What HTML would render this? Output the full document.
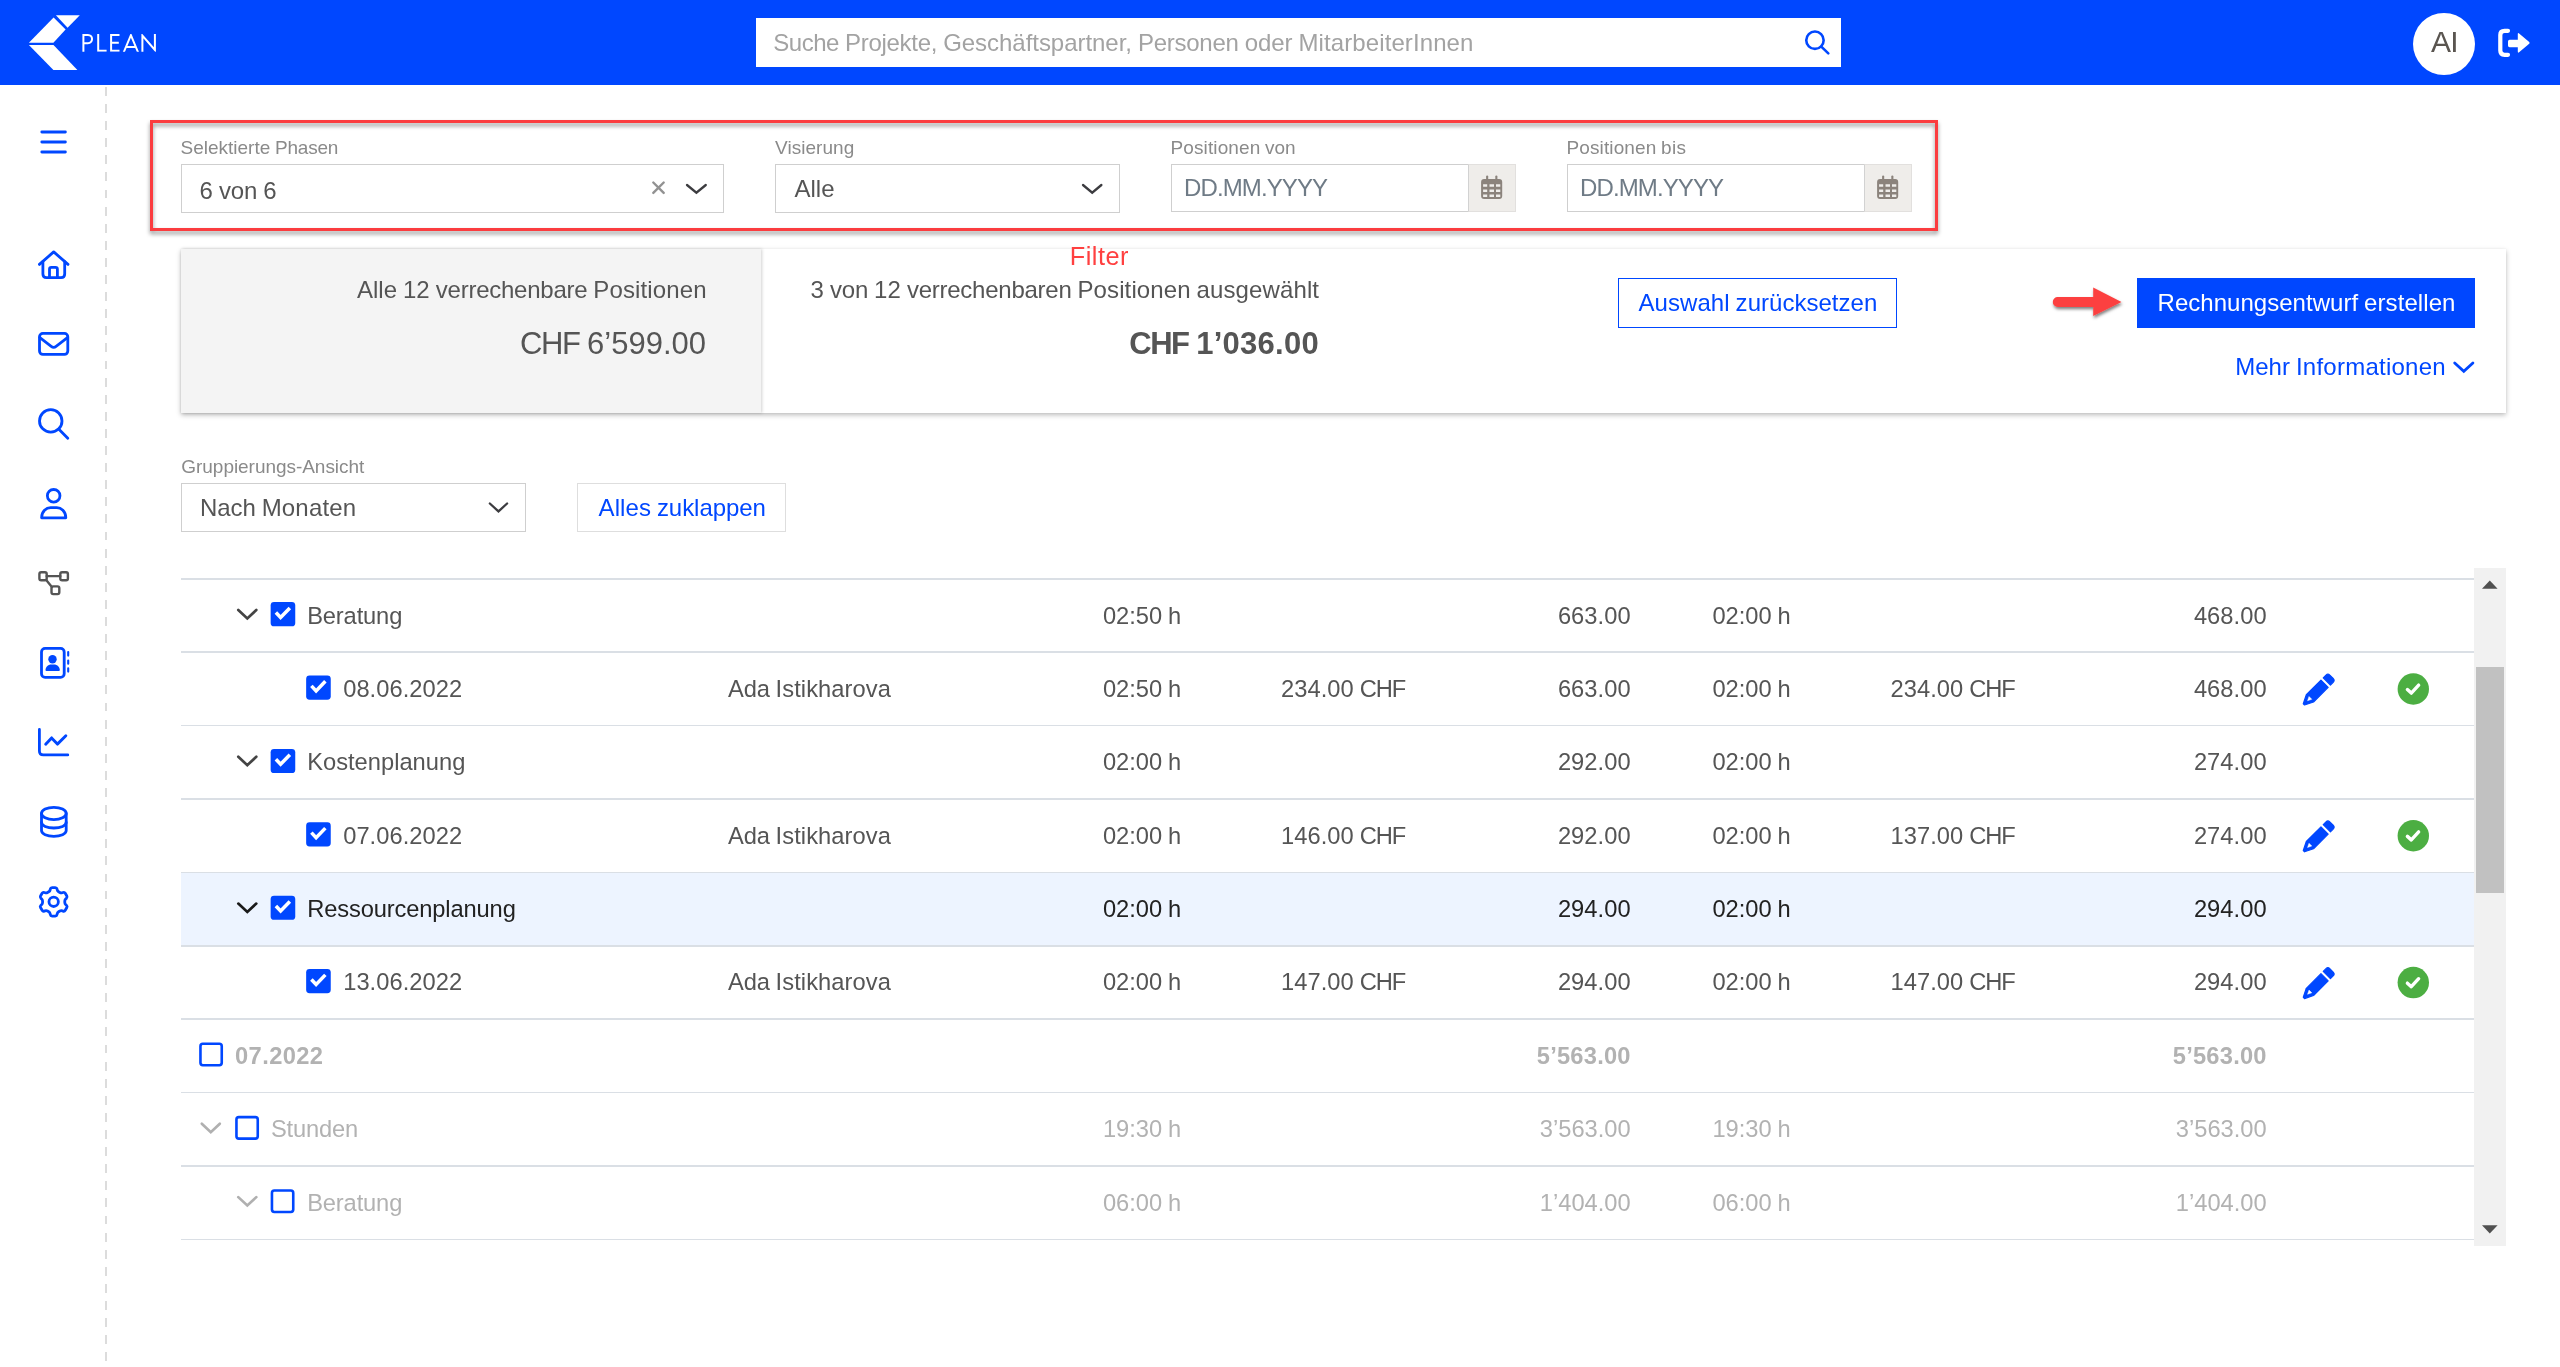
<!DOCTYPE html>
<html lang="de"><head><meta charset="utf-8"><title>PLEAN</title>
<style>
html,body{margin:0;padding:0;overflow:hidden}
html{width:2560px;height:1367px}
body{width:2560px;height:1367px;background:#fff;position:relative;overflow:hidden;font-family:"Liberation Sans",sans-serif;}
.a{position:absolute;box-sizing:border-box}
.t{position:absolute;white-space:pre;font-family:"Liberation Sans",sans-serif}
#hdr{left:0;top:0;width:2560px;height:85px;background:#0047ff}
#search{left:756px;top:17.9px;width:1085px;height:49.6px;background:#fff}
#avatar{left:2413px;top:13px;width:62px;height:62px;border-radius:50%;background:#fff}
#dash{left:105.4px;top:86.5px;width:1.6px;height:1280.5px;background:repeating-linear-gradient(to bottom,#dcdcdc 0,#dcdcdc 8.8px,transparent 8.8px,transparent 17.1px)}
.inp{border:1px solid #cfcfcf;background:#fff}
.addon{background:#efedea;border:1px solid #e2e0de;border-left:1px solid #d2d2d2}
#redbox{left:150px;top:120.2px;width:1788px;height:110.4px;border:3px solid #fb3c3f;filter:drop-shadow(0.8px 3px 2.2px rgba(0,0,0,.42))}
#card{left:181px;top:249px;width:2325px;height:163.5px;background:#fff;box-shadow:0 2px 5px rgba(0,0,0,.27),0 0 1px rgba(0,0,0,.06)}
#cardgray{left:181px;top:249px;width:580px;height:163.5px;background:#f4f4f4;box-shadow:1px 0 3px rgba(0,0,0,.18)}
#btn1{left:1617.5px;top:277.5px;width:279.5px;height:50px;border:1.5px solid #0047ff;background:#fff}
#btn2{left:2137px;top:277.5px;width:338px;height:50px;background:#0047ff}
#btn3{left:577px;top:483px;width:208.75px;height:48.8px;border:1px solid #dedede;background:#fff}
.ln{left:181px;width:2292.8px;height:1.5px;background:#dadfe5}
#sb{left:2473.8px;top:568px;width:32.3px;height:678px;background:#f1f1f1}
#thumb{left:2476px;top:667px;width:28px;height:226px;background:#c1c1c1}
#hl{left:181px;top:872.7px;width:2293px;height:73.4px;background:#edf4ff}
svg{position:absolute;left:0;top:0;overflow:visible}
</style></head>
<body>
<div class="a" id="hdr"></div>
<div class="a" id="search"></div>
<div class="a" id="avatar"></div>
<div class="a" id="dash"></div>

<div class="a" id="card"></div>
<div class="a" id="cardgray"></div>
<div class="a" id="redbox"></div>

<div class="a inp" style="left:181px;top:164px;width:542.75px;height:48.5px"></div>
<div class="a inp" style="left:775px;top:164px;width:344.5px;height:48.5px"></div>
<div class="a inp" style="left:1171px;top:164px;width:344.7px;height:48px"></div>
<div class="a addon" style="left:1468.2px;top:164px;width:47.5px;height:48px"></div>
<div class="a inp" style="left:1567px;top:164px;width:344.7px;height:48px"></div>
<div class="a addon" style="left:1864.2px;top:164px;width:47.5px;height:48px"></div>

<div class="a" id="btn1"></div>
<div class="a" id="btn2"></div>
<div class="a inp" style="left:181px;top:483px;width:344.75px;height:48.8px"></div>
<div class="a" id="btn3"></div>

<div class="a" id="hl"></div>
<div class="a ln" style="top:578.05px"></div>
<div class="a ln" style="top:651.44px"></div>
<div class="a ln" style="top:724.83px"></div>
<div class="a ln" style="top:798.22px"></div>
<div class="a ln" style="top:871.61px"></div>
<div class="a ln" style="top:945.00px"></div>
<div class="a ln" style="top:1018.39px"></div>
<div class="a ln" style="top:1091.78px"></div>
<div class="a ln" style="top:1165.17px"></div>
<div class="a ln" style="top:1238.56px"></div>
<div class="a" id="sb"></div>
<div class="a" id="thumb"></div>

<div id="txt" class="a" style="left:0;top:0;width:2560px;height:1367px;will-change:transform">
<span class="t" style="left:773.20px;top:30.98px;font-size:24px;line-height:24px;font-weight:400;color:#a3a3a3;letter-spacing:-0.456px;">Suche</span>
<span class="t" style="left:844.92px;top:30.98px;font-size:24px;line-height:24px;font-weight:400;color:#a3a3a3;letter-spacing:-0.262px;">Projekte,</span>
<span class="t" style="left:943.20px;top:30.98px;font-size:24px;line-height:24px;font-weight:400;color:#a3a3a3;letter-spacing:-0.041px;">Geschäftspartner,</span>
<span class="t" style="left:1137.88px;top:30.98px;font-size:24px;line-height:24px;font-weight:400;color:#a3a3a3;letter-spacing:-0.241px;">Personen</span>
<span class="t" style="left:1244.63px;top:30.98px;font-size:24px;line-height:24px;font-weight:400;color:#a3a3a3;letter-spacing:-0.028px;">oder</span>
<span class="t" style="left:1298.49px;top:30.98px;font-size:24px;line-height:24px;font-weight:400;color:#a3a3a3;letter-spacing:0.098px;">MitarbeiterInnen</span>
<span class="t" style="left:2431.00px;top:27.00px;font-size:30px;line-height:30px;font-weight:400;color:#5a5550;letter-spacing:-0.880px;">AI</span>
<span class="t" style="left:180.50px;top:138.01px;font-size:19px;line-height:19px;font-weight:400;color:#8a8a8a;letter-spacing:0.001px;">Selektierte</span>
<span class="t" style="left:275.00px;top:138.01px;font-size:19px;line-height:19px;font-weight:400;color:#8a8a8a;letter-spacing:-0.214px;">Phasen</span>
<span class="t" style="left:775.00px;top:138.01px;font-size:19px;line-height:19px;font-weight:400;color:#8a8a8a;letter-spacing:0.047px;">Visierung</span>
<span class="t" style="left:1170.50px;top:138.01px;font-size:19px;line-height:19px;font-weight:400;color:#8a8a8a;letter-spacing:0.114px;">Positionen</span>
<span class="t" style="left:1265.08px;top:138.01px;font-size:19px;line-height:19px;font-weight:400;color:#8a8a8a;letter-spacing:-0.078px;">von</span>
<span class="t" style="left:1566.50px;top:138.01px;font-size:19px;line-height:19px;font-weight:400;color:#8a8a8a;letter-spacing:0.114px;">Positionen</span>
<span class="t" style="left:1661.08px;top:138.01px;font-size:19px;line-height:19px;font-weight:400;color:#8a8a8a;letter-spacing:0.271px;">bis</span>
<span class="t" style="left:199.50px;top:179.08px;font-size:24px;line-height:24px;font-weight:400;color:#555;letter-spacing:0.141px;">6</span>
<span class="t" style="left:218.95px;top:179.08px;font-size:24px;line-height:24px;font-weight:400;color:#555;letter-spacing:-0.104px;">von</span>
<span class="t" style="left:263.30px;top:179.08px;font-size:24px;line-height:24px;font-weight:400;color:#555;letter-spacing:0.141px;">6</span>
<span class="t" style="left:794.50px;top:176.58px;font-size:24px;line-height:24px;font-weight:400;color:#555;letter-spacing:0.008px;">Alle</span>
<span class="t" style="left:1184.00px;top:176.48px;font-size:24px;line-height:24px;font-weight:400;color:#6f7b86;letter-spacing:-0.886px;">DD.MM.YYYY</span>
<span class="t" style="left:1580.00px;top:176.48px;font-size:24px;line-height:24px;font-weight:400;color:#6f7b86;letter-spacing:-0.886px;">DD.MM.YYYY</span>
<span class="t" style="left:357.00px;top:277.68px;font-size:24px;line-height:24px;font-weight:400;color:#555;letter-spacing:-0.012px;">Alle</span>
<span class="t" style="left:402.92px;top:277.68px;font-size:24px;line-height:24px;font-weight:400;color:#555;letter-spacing:0.114px;">12</span>
<span class="t" style="left:435.78px;top:277.68px;font-size:24px;line-height:24px;font-weight:400;color:#555;letter-spacing:-0.243px;">verrechenbare</span>
<span class="t" style="left:593.33px;top:277.68px;font-size:24px;line-height:24px;font-weight:400;color:#555;letter-spacing:0.121px;">Positionen</span>
<span class="t" style="left:519.97px;top:327.95px;font-size:31px;line-height:31px;font-weight:400;color:#555;letter-spacing:-1.427px;">CHF</span>
<span class="t" style="left:587.09px;top:327.95px;font-size:31px;line-height:31px;font-weight:400;color:#555;letter-spacing:-0.004px;">6’599.00</span>
<span class="t" style="left:810.50px;top:277.68px;font-size:24px;line-height:24px;font-weight:400;color:#555;letter-spacing:0.099px;">3</span>
<span class="t" style="left:829.89px;top:277.68px;font-size:24px;line-height:24px;font-weight:400;color:#555;letter-spacing:-0.143px;">von</span>
<span class="t" style="left:874.10px;top:277.68px;font-size:24px;line-height:24px;font-weight:400;color:#555;letter-spacing:0.099px;">12</span>
<span class="t" style="left:906.92px;top:277.68px;font-size:24px;line-height:24px;font-weight:400;color:#555;letter-spacing:-0.247px;">verrechenbaren</span>
<span class="t" style="left:1077.51px;top:277.68px;font-size:24px;line-height:24px;font-weight:400;color:#555;letter-spacing:0.109px;">Positionen</span>
<span class="t" style="left:1196.60px;top:277.68px;font-size:24px;line-height:24px;font-weight:400;color:#555;letter-spacing:0.108px;">ausgewählt</span>
<span class="t" style="left:1129.28px;top:327.95px;font-size:31px;line-height:31px;font-weight:700;color:#555;letter-spacing:-1.510px;">CHF</span>
<span class="t" style="left:1196.17px;top:327.95px;font-size:31px;line-height:31px;font-weight:700;color:#555;letter-spacing:0.270px;">1’036.00</span>
<span class="t" style="left:1069.70px;top:244.48px;font-size:25.3px;line-height:25.3px;font-weight:400;color:#ff4040;letter-spacing:0.514px;">Filter</span>
<span class="t" style="left:1638.50px;top:290.58px;font-size:24px;line-height:24px;font-weight:400;color:#0047ff;letter-spacing:0.064px;">Auswahl</span>
<span class="t" style="left:1735.61px;top:290.58px;font-size:24px;line-height:24px;font-weight:400;color:#0047ff;letter-spacing:0.024px;">zurücksetzen</span>
<span class="t" style="left:2157.60px;top:290.58px;font-size:24px;line-height:24px;font-weight:400;color:#fff;letter-spacing:0.026px;">Rechnungsentwurf</span>
<span class="t" style="left:2364.09px;top:290.58px;font-size:24px;line-height:24px;font-weight:400;color:#fff;letter-spacing:0.079px;">erstellen</span>
<span class="t" style="left:2235.20px;top:355.48px;font-size:24px;line-height:24px;font-weight:400;color:#0047ff;letter-spacing:0.025px;">Mehr</span>
<span class="t" style="left:2295.91px;top:355.48px;font-size:24px;line-height:24px;font-weight:400;color:#0047ff;letter-spacing:0.248px;">Informationen</span>
<span class="t" style="left:181.30px;top:456.91px;font-size:19px;line-height:19px;font-weight:400;color:#8a8a8a;letter-spacing:-0.040px;">Gruppierungs-Ansicht</span>
<span class="t" style="left:199.90px;top:496.08px;font-size:24px;line-height:24px;font-weight:400;color:#555;letter-spacing:-0.043px;">Nach</span>
<span class="t" style="left:261.70px;top:496.08px;font-size:24px;line-height:24px;font-weight:400;color:#555;letter-spacing:0.170px;">Monaten</span>
<span class="t" style="left:598.60px;top:496.08px;font-size:24px;line-height:24px;font-weight:400;color:#0047ff;letter-spacing:0.070px;">Alles</span>
<span class="t" style="left:656.93px;top:496.08px;font-size:24px;line-height:24px;font-weight:400;color:#0047ff;letter-spacing:-0.050px;">zuklappen</span>
<span class="t" style="left:307.20px;top:604.53px;font-size:23.7px;line-height:23.7px;font-weight:400;color:#555;letter-spacing:-0.146px;">Beratung</span>
<span class="t" style="left:1103.00px;top:604.53px;font-size:23.7px;line-height:23.7px;font-weight:400;color:#555;letter-spacing:-0.056px;">02:50</span>
<span class="t" style="left:1167.88px;top:604.53px;font-size:23.7px;line-height:23.7px;font-weight:400;color:#555;letter-spacing:-0.141px;">h</span>
<span class="t" style="left:1557.89px;top:604.53px;font-size:23.7px;line-height:23.7px;font-weight:400;color:#555;letter-spacing:0.060px;">663.00</span>
<span class="t" style="left:1712.50px;top:604.53px;font-size:23.7px;line-height:23.7px;font-weight:400;color:#555;letter-spacing:-0.056px;">02:00</span>
<span class="t" style="left:1777.38px;top:604.53px;font-size:23.7px;line-height:23.7px;font-weight:400;color:#555;letter-spacing:-0.141px;">h</span>
<span class="t" style="left:2193.89px;top:604.53px;font-size:23.7px;line-height:23.7px;font-weight:400;color:#555;letter-spacing:0.060px;">468.00</span>
<span class="t" style="left:343.20px;top:677.92px;font-size:23.7px;line-height:23.7px;font-weight:400;color:#555;letter-spacing:0.044px;">08.06.2022</span>
<span class="t" style="left:728.00px;top:677.92px;font-size:23.7px;line-height:23.7px;font-weight:400;color:#555;letter-spacing:-0.151px;">Ada</span>
<span class="t" style="left:775.58px;top:677.92px;font-size:23.7px;line-height:23.7px;font-weight:400;color:#555;letter-spacing:0.081px;">Istikharova</span>
<span class="t" style="left:1103.00px;top:677.92px;font-size:23.7px;line-height:23.7px;font-weight:400;color:#555;letter-spacing:-0.056px;">02:50</span>
<span class="t" style="left:1167.88px;top:677.92px;font-size:23.7px;line-height:23.7px;font-weight:400;color:#555;letter-spacing:-0.141px;">h</span>
<span class="t" style="left:1281.00px;top:677.92px;font-size:23.7px;line-height:23.7px;font-weight:400;color:#555;letter-spacing:0.060px;">234.00</span>
<span class="t" style="left:1359.69px;top:677.92px;font-size:23.7px;line-height:23.7px;font-weight:400;color:#555;letter-spacing:-1.089px;">CHF</span>
<span class="t" style="left:1557.89px;top:677.92px;font-size:23.7px;line-height:23.7px;font-weight:400;color:#555;letter-spacing:0.060px;">663.00</span>
<span class="t" style="left:1712.50px;top:677.92px;font-size:23.7px;line-height:23.7px;font-weight:400;color:#555;letter-spacing:-0.056px;">02:00</span>
<span class="t" style="left:1777.38px;top:677.92px;font-size:23.7px;line-height:23.7px;font-weight:400;color:#555;letter-spacing:-0.141px;">h</span>
<span class="t" style="left:1890.50px;top:677.92px;font-size:23.7px;line-height:23.7px;font-weight:400;color:#555;letter-spacing:0.060px;">234.00</span>
<span class="t" style="left:1969.19px;top:677.92px;font-size:23.7px;line-height:23.7px;font-weight:400;color:#555;letter-spacing:-1.089px;">CHF</span>
<span class="t" style="left:2193.89px;top:677.92px;font-size:23.7px;line-height:23.7px;font-weight:400;color:#555;letter-spacing:0.060px;">468.00</span>
<span class="t" style="left:307.20px;top:751.31px;font-size:23.7px;line-height:23.7px;font-weight:400;color:#555;letter-spacing:0.007px;">Kostenplanung</span>
<span class="t" style="left:1103.00px;top:751.31px;font-size:23.7px;line-height:23.7px;font-weight:400;color:#555;letter-spacing:-0.056px;">02:00</span>
<span class="t" style="left:1167.88px;top:751.31px;font-size:23.7px;line-height:23.7px;font-weight:400;color:#555;letter-spacing:-0.141px;">h</span>
<span class="t" style="left:1557.89px;top:751.31px;font-size:23.7px;line-height:23.7px;font-weight:400;color:#555;letter-spacing:0.060px;">292.00</span>
<span class="t" style="left:1712.50px;top:751.31px;font-size:23.7px;line-height:23.7px;font-weight:400;color:#555;letter-spacing:-0.056px;">02:00</span>
<span class="t" style="left:1777.38px;top:751.31px;font-size:23.7px;line-height:23.7px;font-weight:400;color:#555;letter-spacing:-0.141px;">h</span>
<span class="t" style="left:2193.89px;top:751.31px;font-size:23.7px;line-height:23.7px;font-weight:400;color:#555;letter-spacing:0.060px;">274.00</span>
<span class="t" style="left:343.20px;top:824.70px;font-size:23.7px;line-height:23.7px;font-weight:400;color:#555;letter-spacing:0.044px;">07.06.2022</span>
<span class="t" style="left:728.00px;top:824.70px;font-size:23.7px;line-height:23.7px;font-weight:400;color:#555;letter-spacing:-0.151px;">Ada</span>
<span class="t" style="left:775.58px;top:824.70px;font-size:23.7px;line-height:23.7px;font-weight:400;color:#555;letter-spacing:0.081px;">Istikharova</span>
<span class="t" style="left:1103.00px;top:824.70px;font-size:23.7px;line-height:23.7px;font-weight:400;color:#555;letter-spacing:-0.056px;">02:00</span>
<span class="t" style="left:1167.88px;top:824.70px;font-size:23.7px;line-height:23.7px;font-weight:400;color:#555;letter-spacing:-0.141px;">h</span>
<span class="t" style="left:1281.00px;top:824.70px;font-size:23.7px;line-height:23.7px;font-weight:400;color:#555;letter-spacing:0.060px;">146.00</span>
<span class="t" style="left:1359.69px;top:824.70px;font-size:23.7px;line-height:23.7px;font-weight:400;color:#555;letter-spacing:-1.089px;">CHF</span>
<span class="t" style="left:1557.89px;top:824.70px;font-size:23.7px;line-height:23.7px;font-weight:400;color:#555;letter-spacing:0.060px;">292.00</span>
<span class="t" style="left:1712.50px;top:824.70px;font-size:23.7px;line-height:23.7px;font-weight:400;color:#555;letter-spacing:-0.056px;">02:00</span>
<span class="t" style="left:1777.38px;top:824.70px;font-size:23.7px;line-height:23.7px;font-weight:400;color:#555;letter-spacing:-0.141px;">h</span>
<span class="t" style="left:1890.50px;top:824.70px;font-size:23.7px;line-height:23.7px;font-weight:400;color:#555;letter-spacing:0.060px;">137.00</span>
<span class="t" style="left:1969.19px;top:824.70px;font-size:23.7px;line-height:23.7px;font-weight:400;color:#555;letter-spacing:-1.089px;">CHF</span>
<span class="t" style="left:2193.89px;top:824.70px;font-size:23.7px;line-height:23.7px;font-weight:400;color:#555;letter-spacing:0.060px;">274.00</span>
<span class="t" style="left:307.20px;top:898.09px;font-size:23.7px;line-height:23.7px;font-weight:400;color:#222;letter-spacing:-0.130px;">Ressourcenplanung</span>
<span class="t" style="left:1103.00px;top:898.09px;font-size:23.7px;line-height:23.7px;font-weight:400;color:#222;letter-spacing:-0.056px;">02:00</span>
<span class="t" style="left:1167.88px;top:898.09px;font-size:23.7px;line-height:23.7px;font-weight:400;color:#222;letter-spacing:-0.141px;">h</span>
<span class="t" style="left:1557.89px;top:898.09px;font-size:23.7px;line-height:23.7px;font-weight:400;color:#222;letter-spacing:0.060px;">294.00</span>
<span class="t" style="left:1712.50px;top:898.09px;font-size:23.7px;line-height:23.7px;font-weight:400;color:#222;letter-spacing:-0.056px;">02:00</span>
<span class="t" style="left:1777.38px;top:898.09px;font-size:23.7px;line-height:23.7px;font-weight:400;color:#222;letter-spacing:-0.141px;">h</span>
<span class="t" style="left:2193.89px;top:898.09px;font-size:23.7px;line-height:23.7px;font-weight:400;color:#222;letter-spacing:0.060px;">294.00</span>
<span class="t" style="left:343.20px;top:971.48px;font-size:23.7px;line-height:23.7px;font-weight:400;color:#555;letter-spacing:0.044px;">13.06.2022</span>
<span class="t" style="left:728.00px;top:971.48px;font-size:23.7px;line-height:23.7px;font-weight:400;color:#555;letter-spacing:-0.151px;">Ada</span>
<span class="t" style="left:775.58px;top:971.48px;font-size:23.7px;line-height:23.7px;font-weight:400;color:#555;letter-spacing:0.081px;">Istikharova</span>
<span class="t" style="left:1103.00px;top:971.48px;font-size:23.7px;line-height:23.7px;font-weight:400;color:#555;letter-spacing:-0.056px;">02:00</span>
<span class="t" style="left:1167.88px;top:971.48px;font-size:23.7px;line-height:23.7px;font-weight:400;color:#555;letter-spacing:-0.141px;">h</span>
<span class="t" style="left:1281.00px;top:971.48px;font-size:23.7px;line-height:23.7px;font-weight:400;color:#555;letter-spacing:0.060px;">147.00</span>
<span class="t" style="left:1359.69px;top:971.48px;font-size:23.7px;line-height:23.7px;font-weight:400;color:#555;letter-spacing:-1.089px;">CHF</span>
<span class="t" style="left:1557.89px;top:971.48px;font-size:23.7px;line-height:23.7px;font-weight:400;color:#555;letter-spacing:0.060px;">294.00</span>
<span class="t" style="left:1712.50px;top:971.48px;font-size:23.7px;line-height:23.7px;font-weight:400;color:#555;letter-spacing:-0.056px;">02:00</span>
<span class="t" style="left:1777.38px;top:971.48px;font-size:23.7px;line-height:23.7px;font-weight:400;color:#555;letter-spacing:-0.141px;">h</span>
<span class="t" style="left:1890.50px;top:971.48px;font-size:23.7px;line-height:23.7px;font-weight:400;color:#555;letter-spacing:0.060px;">147.00</span>
<span class="t" style="left:1969.19px;top:971.48px;font-size:23.7px;line-height:23.7px;font-weight:400;color:#555;letter-spacing:-1.089px;">CHF</span>
<span class="t" style="left:2193.89px;top:971.48px;font-size:23.7px;line-height:23.7px;font-weight:400;color:#555;letter-spacing:0.060px;">294.00</span>
<span class="t" style="left:235.00px;top:1044.87px;font-size:23.7px;line-height:23.7px;font-weight:700;color:#b2b2b2;letter-spacing:0.400px;">07.2022</span>
<span class="t" style="left:1536.84px;top:1044.87px;font-size:23.7px;line-height:23.7px;font-weight:700;color:#b2b2b2;letter-spacing:0.205px;">5’563.00</span>
<span class="t" style="left:2172.84px;top:1044.87px;font-size:23.7px;line-height:23.7px;font-weight:700;color:#b2b2b2;letter-spacing:0.205px;">5’563.00</span>
<span class="t" style="left:271.00px;top:1118.26px;font-size:23.7px;line-height:23.7px;font-weight:400;color:#b2b2b2;letter-spacing:-0.183px;">Stunden</span>
<span class="t" style="left:1103.00px;top:1118.26px;font-size:23.7px;line-height:23.7px;font-weight:400;color:#b2b2b2;letter-spacing:-0.056px;">19:30</span>
<span class="t" style="left:1167.88px;top:1118.26px;font-size:23.7px;line-height:23.7px;font-weight:400;color:#b2b2b2;letter-spacing:-0.141px;">h</span>
<span class="t" style="left:1539.83px;top:1118.26px;font-size:23.7px;line-height:23.7px;font-weight:400;color:#b2b2b2;letter-spacing:-0.002px;">3’563.00</span>
<span class="t" style="left:1712.50px;top:1118.26px;font-size:23.7px;line-height:23.7px;font-weight:400;color:#b2b2b2;letter-spacing:-0.056px;">19:30</span>
<span class="t" style="left:1777.38px;top:1118.26px;font-size:23.7px;line-height:23.7px;font-weight:400;color:#b2b2b2;letter-spacing:-0.141px;">h</span>
<span class="t" style="left:2175.82px;top:1118.26px;font-size:23.7px;line-height:23.7px;font-weight:400;color:#b2b2b2;letter-spacing:-0.002px;">3’563.00</span>
<span class="t" style="left:307.20px;top:1191.65px;font-size:23.7px;line-height:23.7px;font-weight:400;color:#b2b2b2;letter-spacing:-0.146px;">Beratung</span>
<span class="t" style="left:1103.00px;top:1191.65px;font-size:23.7px;line-height:23.7px;font-weight:400;color:#b2b2b2;letter-spacing:-0.056px;">06:00</span>
<span class="t" style="left:1167.88px;top:1191.65px;font-size:23.7px;line-height:23.7px;font-weight:400;color:#b2b2b2;letter-spacing:-0.141px;">h</span>
<span class="t" style="left:1539.83px;top:1191.65px;font-size:23.7px;line-height:23.7px;font-weight:400;color:#b2b2b2;letter-spacing:-0.002px;">1’404.00</span>
<span class="t" style="left:1712.50px;top:1191.65px;font-size:23.7px;line-height:23.7px;font-weight:400;color:#b2b2b2;letter-spacing:-0.056px;">06:00</span>
<span class="t" style="left:1777.38px;top:1191.65px;font-size:23.7px;line-height:23.7px;font-weight:400;color:#b2b2b2;letter-spacing:-0.141px;">h</span>
<span class="t" style="left:2175.82px;top:1191.65px;font-size:23.7px;line-height:23.7px;font-weight:400;color:#b2b2b2;letter-spacing:-0.002px;">1’404.00</span>
</div>

<svg width="2560" height="1367" viewBox="0 0 2560 1367">
<g fill="#fff"><polygon points="28.9,42.7 53.6,17.6 65.6,29.4 53.4,42.7"/><polygon points="55.9,15.2 79.8,15.2 67.6,27.8"/><polygon points="28.9,45.1 53.5,45.1 77.4,70 53.4,70"/></g>
<defs><clipPath id="capc"><rect x="80" y="34" width="80" height="17.65"/></clipPath></defs>
<g clip-path="url(#capc)" fill="none" stroke="#fff" stroke-width="2" stroke-linejoin="miter" stroke-linecap="butt"><path d="M83.4 52 V35 H87.9 C93.4 35 93.4 43.2 87.9 43.2 H83.4"/><path d="M98.2 33 V50.65 H106.6"/><path d="M119.5 35 H111.1 V50.65 H119.5 M111.1 42.8 H118.8"/><path d="M123.7 52.3 L130.9 35.2 L138.1 52.3 M126.4 47 H135.4"/><path d="M142.4 52.5 V35.6 L154.9 50 V33"/></g>
<g fill="none" stroke="#0047ff" stroke-width="2.6" stroke-linecap="round"><circle cx="1814.95" cy="40.2" r="8.7"/><path d="M1821.3 46.6 L1828.3 53.4"/></g>
<g fill="none" stroke="#fff" stroke-width="4.2" stroke-linecap="round" stroke-linejoin="round"><path d="M2508 30.8 H2504.5 Q2500.3 30.8 2500.3 35 V50.6 Q2500.3 54.8 2504.5 54.8 H2508"/></g><path fill="#fff" d="M2509.6 39.8 H2517.8 V34 Q2517.8 32.3 2519.1 33.4 L2529.2 41.9 Q2530.1 42.8 2529.2 43.7 L2519.1 52.2 Q2517.8 53.3 2517.8 51.6 V47.2 H2509.6 Q2508 47.2 2508 45.6 V41.4 Q2508 39.8 2509.6 39.8 Z"/>
<g fill="none" stroke="#0047ff" stroke-width="2.8" stroke-linecap="round" stroke-linejoin="round" stroke-width="3.2"><path d="M41.8 132 H65.4 M41.8 142 H65.4 M41.8 152 H65.4"/></g>
<g fill="none" stroke="#0047ff" stroke-width="2.8" stroke-linecap="round" stroke-linejoin="round" stroke-width="2.6"><path d="M39.4 264.4 L53.7 251.9 L68 264.4"/><path d="M42.9 261.6 V274 Q42.9 277.6 46.5 277.6 H61.1 Q64.7 277.6 64.7 274 V261.6"/><path d="M49.5 277.4 V269.2 Q49.5 267.3 51.4 267.3 H55.5 Q57.4 267.3 57.4 269.2 V277.4"/></g>
<g fill="none" stroke="#0047ff" stroke-width="2.8" stroke-linecap="round" stroke-linejoin="round"><rect x="39.5" y="333.4" width="28.3" height="21" rx="3.4"/><path stroke-width="2.7" d="M39.9 337.6 L51.2 346.4 Q53.65 348.3 56.1 346.4 L67.4 337.6"/></g>
<g fill="none" stroke="#0047ff" stroke-width="2.8" stroke-linecap="round" stroke-linejoin="round" stroke-width="2.9"><circle cx="50.75" cy="420.9" r="11.25"/><path d="M58.9 429.2 L67.8 438.2"/></g>
<g fill="none" stroke="#0047ff" stroke-width="2.8" stroke-linecap="round" stroke-linejoin="round" stroke-width="2.9"><circle cx="53.67" cy="495.8" r="6.3"/><path d="M41.6 517.8 C41.6 511.2 46.4 507.7 50.6 507.7 H56.8 C61 507.7 65.8 511.2 65.8 517.8 Z"/></g>
<g fill="none" stroke="#555" stroke-width="2.4" stroke-linejoin="round" stroke-linecap="round"><rect x="39.4" y="572.2" width="7.3" height="8" rx="1.8"/><rect x="60.3" y="572.2" width="7.6" height="8" rx="1.8"/><rect x="51.5" y="586.4" width="7.8" height="7.7" rx="1.8"/><path d="M46.7 576.1 H60.3 M46.2 580 L51.9 587"/></g>
<g fill="none" stroke="#0047ff" stroke-width="2.8" stroke-linecap="round" stroke-linejoin="round" stroke-width="2.9"><rect x="41.5" y="648.4" width="22.7" height="28.9" rx="3.6"/></g><g fill="#0047ff"><circle cx="52.5" cy="659.2" r="4.2"/><path d="M45.5 670 C45.6 666.6 48.6 664.5 51 664.5 H54.3 C56.7 664.5 59.7 666.6 59.8 670 Q59.8 670.9 58.9 670.9 H46.4 Q45.5 670.9 45.5 670 Z"/></g><g stroke="#0047ff" stroke-width="2.1" stroke-linecap="round"><path d="M68.2 652.1 V655.6 M68.2 660.5 V663.7 M68.2 668.2 V671.6"/></g>
<g fill="none" stroke="#0047ff" stroke-width="2.8" stroke-linecap="round" stroke-linejoin="round" stroke-width="3"><path d="M39.4 729.4 V751 Q39.4 754.9 43.3 754.9 H67.8"/><path stroke-width="2.9" d="M45.7 744.3 L51.6 737.9 L57.4 744.1 L65.85 735.7"/></g>
<g fill="none" stroke="#0047ff" stroke-width="2.8" stroke-linecap="round" stroke-linejoin="round" stroke-width="2.9"><ellipse cx="53.85" cy="813.45" rx="12.35" ry="6.15"/><path d="M41.5 813.45 V830.6 C41.5 834 47 836.3 53.85 836.3 C60.7 836.3 66.2 834 66.2 830.6 V813.45"/><path d="M41.5 822.3 C41.5 825.7 47 828 53.85 828 C60.7 828 66.2 825.7 66.2 822.3"/></g>
<g fill="none" stroke="#0047ff" stroke-width="2.8" stroke-linecap="round" stroke-linejoin="round" stroke-width="2.8"><path d="M48.77 891.80 Q49.90 891.15 50.14 889.87 L50.30 889.00 Q50.58 887.53 52.08 887.53 L55.26 887.53 Q56.76 887.53 57.04 889.00 L57.20 889.87 Q57.44 891.15 58.57 891.80 L59.88 892.56 Q61.01 893.21 62.24 892.78 L63.07 892.49 Q64.49 891.99 65.24 893.29 L66.82 896.04 Q67.57 897.34 66.43 898.32 L65.77 898.89 Q64.78 899.74 64.78 901.04 L64.78 902.56 Q64.78 903.86 65.77 904.71 L66.43 905.28 Q67.57 906.26 66.82 907.56 L65.24 910.31 Q64.49 911.61 63.07 911.11 L62.24 910.82 Q61.01 910.39 59.88 911.04 L58.57 911.80 Q57.44 912.45 57.20 913.73 L57.04 914.60 Q56.76 916.07 55.26 916.07 L52.08 916.07 Q50.58 916.07 50.30 914.60 L50.14 913.73 Q49.90 912.45 48.77 911.80 L47.46 911.04 Q46.33 910.39 45.10 910.82 L44.27 911.11 Q42.85 911.61 42.10 910.31 L40.52 907.56 Q39.77 906.26 40.91 905.28 L41.57 904.71 Q42.56 903.86 42.56 902.56 L42.56 901.04 Q42.56 899.74 41.57 898.89 L40.91 898.32 Q39.77 897.34 40.52 896.04 L42.10 893.29 Q42.85 891.99 44.27 892.49 L45.10 892.78 Q46.33 893.21 47.46 892.56 Z"/><circle cx="53.67" cy="901.8" r="4.7"/></g>
<path fill="none" stroke="#929292" stroke-width="2.4" stroke-linecap="round" d="M653.3 182.5 L663.7 192.9 M663.7 182.5 L653.3 192.9"/>
<path fill="none" stroke="#3c3c40" stroke-width="2.3" stroke-linecap="round" stroke-linejoin="miter" d="M687.0 185.0 L696.4 192.70000000000002 L705.8 185.0"/>
<path fill="none" stroke="#3c3c40" stroke-width="2.3" stroke-linecap="round" stroke-linejoin="miter" d="M1083.0 185.0 L1092.2 192.70000000000002 L1101.4 185.0"/>
<path fill="none" stroke="#3c3c40" stroke-width="2.3" stroke-linecap="round" stroke-linejoin="miter" d="M489.85 503.5 L498.475 511.4 L507.09999999999997 503.5"/>
<path fill="none" stroke="#0047ff" stroke-width="2.8" stroke-linecap="round" stroke-linejoin="miter" d="M2454.7 363.0 L2463.8 371.4 L2472.9 363.0"/>
<g fill="#8b837c"><rect x="1486.10" y="175.50" width="2.1" height="6" rx="1"/><rect x="1495.30" y="175.50" width="2.1" height="6" rx="1"/><path fill-rule="evenodd" d="M1484.10 178.90 H1499.20 Q1502.20 178.90 1502.20 181.90 V196.00 Q1502.20 199.00 1499.20 199.00 H1484.10 Q1481.10 199.00 1481.10 196.00 V181.90 Q1481.10 178.90 1484.10 178.90 Z M1483.10 184.20 h4.1 v2.6 h-4.1 Z M1489.50 184.20 h4.5 v2.6 h-4.5 Z M1496.00 184.20 h4.3 v2.6 h-4.3 Z M1483.10 189.40 h4.1 v2.6 h-4.1 Z M1489.50 189.40 h4.5 v2.6 h-4.5 Z M1496.00 189.40 h4.3 v2.6 h-4.3 Z M1483.10 194.50 h4.1 v2.5 h-4.1 Z M1489.50 194.50 h4.5 v2.5 h-4.5 Z M1496.00 194.50 h4.3 v2.5 h-4.3 Z "/></g>
<g fill="#8b837c"><rect x="1882.10" y="175.50" width="2.1" height="6" rx="1"/><rect x="1891.30" y="175.50" width="2.1" height="6" rx="1"/><path fill-rule="evenodd" d="M1880.10 178.90 H1895.20 Q1898.20 178.90 1898.20 181.90 V196.00 Q1898.20 199.00 1895.20 199.00 H1880.10 Q1877.10 199.00 1877.10 196.00 V181.90 Q1877.10 178.90 1880.10 178.90 Z M1879.10 184.20 h4.1 v2.6 h-4.1 Z M1885.50 184.20 h4.5 v2.6 h-4.5 Z M1892.00 184.20 h4.3 v2.6 h-4.3 Z M1879.10 189.40 h4.1 v2.6 h-4.1 Z M1885.50 189.40 h4.5 v2.6 h-4.5 Z M1892.00 189.40 h4.3 v2.6 h-4.3 Z M1879.10 194.50 h4.1 v2.5 h-4.1 Z M1885.50 194.50 h4.5 v2.5 h-4.5 Z M1892.00 194.50 h4.3 v2.5 h-4.3 Z "/></g>
<defs><filter id="ash" x="-20%" y="-40%" width="140%" height="200%"><feDropShadow dx="0.8" dy="2.2" stdDeviation="1.6" flood-color="#000" flood-opacity="0.5"/></filter></defs>
<g filter="url(#ash)" fill="#fc4141"><path d="M2057.7 297.1 H2093.2 V287.6 L2121.5 301.9 L2093.2 316.1 V306.9 H2057.7 A4.9 4.9 0 0 1 2057.7 297.1 Z"/></g>
<path fill="#505050" d="M2482 588.7 L2489.8 580.6 L2497.6 588.7 Z"/>
<path fill="#505050" d="M2482 1225.3 L2497.6 1225.3 L2489.8 1233.4 Z"/>
<path fill="none" stroke="#444" stroke-width="2.7" stroke-linecap="round" stroke-linejoin="miter" d="M238.3 610.0000000000001 L247.3 618.4000000000001 L256.3 610.0000000000001"/>
<rect x="270.65" y="602.10" width="24.6" height="24.2" rx="3.4" fill="#0047ff"/><path fill="none" stroke="#fff" stroke-width="3.5" stroke-linecap="butt" stroke-linejoin="miter" d="M275.90 612.50 L280.60 617.50 L289.85 607.95"/>
<rect x="306.15" y="675.49" width="24.6" height="24.2" rx="3.4" fill="#0047ff"/><path fill="none" stroke="#fff" stroke-width="3.5" stroke-linecap="butt" stroke-linejoin="miter" d="M311.40 685.89 L316.10 690.89 L325.35 681.34"/>
<g transform="translate(2303.00,705.29) rotate(-45)" fill="#0047ff" stroke="#0047ff" stroke-width="1.2" stroke-linejoin="round"><path fill-rule="evenodd" d="M1.3 -0.9 L9.8 -5.1 L30.5 -5.1 L30.5 5.1 L9.8 5.1 L1.3 0.9 Z"/><path d="M33.7 -5.1 H37.6 Q40.3 -5.1 40.3 -2.4 V2.4 Q40.3 5.1 37.6 5.1 H33.7 Z"/><path d="M6.4 0 L10.5 -2.0 L10.5 2.0 Z" fill="#fff" stroke="#fff" stroke-width="0.4"/></g>
<circle cx="2413.3" cy="688.99" r="15.7" fill="#4cae42"/><path fill="none" stroke="#fff" stroke-width="3.4" stroke-linecap="round" stroke-linejoin="round" d="M2407.40 689.59 L2411.30 693.09 L2418.65 685.14"/>
<path fill="none" stroke="#444" stroke-width="2.7" stroke-linecap="round" stroke-linejoin="miter" d="M238.3 756.7800000000001 L247.3 765.1800000000001 L256.3 756.7800000000001"/>
<rect x="270.65" y="748.88" width="24.6" height="24.2" rx="3.4" fill="#0047ff"/><path fill="none" stroke="#fff" stroke-width="3.5" stroke-linecap="butt" stroke-linejoin="miter" d="M275.90 759.28 L280.60 764.28 L289.85 754.73"/>
<rect x="306.15" y="822.27" width="24.6" height="24.2" rx="3.4" fill="#0047ff"/><path fill="none" stroke="#fff" stroke-width="3.5" stroke-linecap="butt" stroke-linejoin="miter" d="M311.40 832.67 L316.10 837.67 L325.35 828.12"/>
<g transform="translate(2303.00,852.07) rotate(-45)" fill="#0047ff" stroke="#0047ff" stroke-width="1.2" stroke-linejoin="round"><path fill-rule="evenodd" d="M1.3 -0.9 L9.8 -5.1 L30.5 -5.1 L30.5 5.1 L9.8 5.1 L1.3 0.9 Z"/><path d="M33.7 -5.1 H37.6 Q40.3 -5.1 40.3 -2.4 V2.4 Q40.3 5.1 37.6 5.1 H33.7 Z"/><path d="M6.4 0 L10.5 -2.0 L10.5 2.0 Z" fill="#fff" stroke="#fff" stroke-width="0.4"/></g>
<circle cx="2413.3" cy="835.77" r="15.7" fill="#4cae42"/><path fill="none" stroke="#fff" stroke-width="3.4" stroke-linecap="round" stroke-linejoin="round" d="M2407.40 836.37 L2411.30 839.87 L2418.65 831.92"/>
<path fill="none" stroke="#1a1a1a" stroke-width="2.7" stroke-linecap="round" stroke-linejoin="miter" d="M238.3 903.5600000000002 L247.3 911.9600000000002 L256.3 903.5600000000002"/>
<rect x="270.65" y="895.66" width="24.6" height="24.2" rx="3.4" fill="#0047ff"/><path fill="none" stroke="#fff" stroke-width="3.5" stroke-linecap="butt" stroke-linejoin="miter" d="M275.90 906.06 L280.60 911.06 L289.85 901.51"/>
<rect x="306.15" y="969.05" width="24.6" height="24.2" rx="3.4" fill="#0047ff"/><path fill="none" stroke="#fff" stroke-width="3.5" stroke-linecap="butt" stroke-linejoin="miter" d="M311.40 979.45 L316.10 984.45 L325.35 974.90"/>
<g transform="translate(2303.00,998.85) rotate(-45)" fill="#0047ff" stroke="#0047ff" stroke-width="1.2" stroke-linejoin="round"><path fill-rule="evenodd" d="M1.3 -0.9 L9.8 -5.1 L30.5 -5.1 L30.5 5.1 L9.8 5.1 L1.3 0.9 Z"/><path d="M33.7 -5.1 H37.6 Q40.3 -5.1 40.3 -2.4 V2.4 Q40.3 5.1 37.6 5.1 H33.7 Z"/><path d="M6.4 0 L10.5 -2.0 L10.5 2.0 Z" fill="#fff" stroke="#fff" stroke-width="0.4"/></g>
<circle cx="2413.3" cy="982.55" r="15.7" fill="#4cae42"/><path fill="none" stroke="#fff" stroke-width="3.4" stroke-linecap="round" stroke-linejoin="round" d="M2407.40 983.15 L2411.30 986.65 L2418.65 978.70"/>
<rect x="200.45" y="1043.74" width="21.3" height="21.5" rx="2.4" fill="#fff" stroke="#0047ff" stroke-width="2.6"/>
<path fill="none" stroke="#b0b0b0" stroke-width="2.7" stroke-linecap="round" stroke-linejoin="miter" d="M201.8 1123.73 L210.8 1132.1299999999999 L219.8 1123.73"/>
<rect x="236.45" y="1117.13" width="21.3" height="21.5" rx="2.4" fill="#fff" stroke="#0047ff" stroke-width="2.6"/>
<path fill="none" stroke="#b0b0b0" stroke-width="2.7" stroke-linecap="round" stroke-linejoin="miter" d="M238.3 1197.1200000000001 L247.3 1205.52 L256.3 1197.1200000000001"/>
<rect x="271.95" y="1190.52" width="21.3" height="21.5" rx="2.4" fill="#fff" stroke="#0047ff" stroke-width="2.6"/>
</svg>
</body></html>
